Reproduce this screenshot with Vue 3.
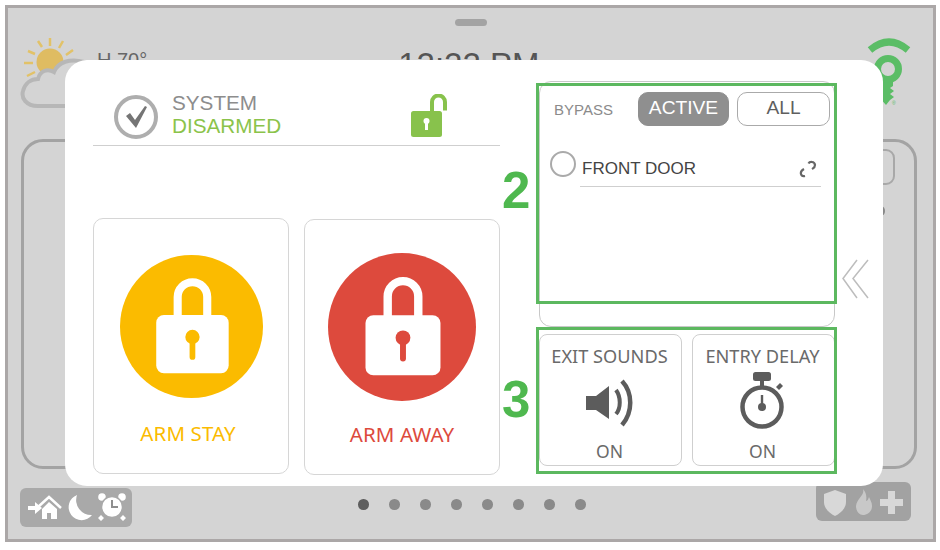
<script setup>
const armCards = [
  { label: 'ARM STAY', color: '#fbbb00', cls: 'stay' },
  { label: 'ARM AWAY', color: '#dd4a3d', cls: 'away' }
];

const dots = [0, 1, 2, 3, 4, 5, 6, 7];
</script>

<template>
  <div class="frame">
    <div class="handle"></div>

    <div class="status-bar">
      <svg class="weather" viewBox="18 36 72 74" width="72" height="74">
        <g stroke="#e2c268" stroke-width="2.5" fill="none">
          <path d="M50 38v8M38 41l4 6M63 41l-4 7M28 51l7 3M73 50l-7 5M24 63h9M27 76l8-4" />
        </g>
        <circle cx="50" cy="62" r="13.5" fill="#dfbc62" />
        <path
          d="M88 106H38C26 106 21 98 23 91C25 83 31 79 38 79C40 71 47 68 54 72C58 62 70 58 84 62Z"
          fill="#d4d4d4"
          stroke="#b7b7b7"
          stroke-width="4"
        />
      </svg>
      <span class="temp">H 70°</span>
      <span class="time">12:22 PM</span>
      <svg class="key" viewBox="860 36 56 72" width="56" height="72">
        <path d="M870 50Q889 34 908 50" fill="none" stroke="#5bbd66" stroke-width="7" />
        <path d="M880 78H893V86L890 88L894 91L890 94L894 97L890 100L886 105L878 96Z" fill="#5bbd66" />
        <circle cx="888" cy="69" r="10.5" fill="#d4d4d4" stroke="#5bbd66" stroke-width="7" />
        <text x="892" y="105" class="reg">®</text>
      </svg>
    </div>

    <div class="back-panel">
      <div class="back-box"></div>
      <div class="back-dot"></div>
    </div>

    <div class="footer">
      <div class="tray tray-left">
        <svg viewBox="0 0 112 39" width="112" height="39" fill="#fff">
          <path d="M8 18h7v-4l7 6-7 6v-4H8z" />
          <path d="M18 19L29 9l12 11" fill="none" stroke="#fff" stroke-width="2.5" />
          <path d="M22 21l7-7 8 7v10h-6v-6h-4v6h-5z" />
          <path d="M57 7A13 13 0 1 0 72 27A15 15 0 0 1 57 7Z" />
          <circle cx="82" cy="9" r="3.8" />
          <circle cx="102" cy="9" r="3.8" />
          <path d="M81 27l3 3-3 3-3-3zM103 27l3 3-3 3-3-3z" />
          <circle cx="92" cy="19" r="10.5" fill="#fff" stroke="#a9a9a9" stroke-width="1.5" />
          <path d="M92 12v7h6" fill="none" stroke="#8f8f8f" stroke-width="2" />
        </svg>
      </div>
      <div class="dots">
        <span v-for="d in dots" :key="d" class="dot" :class="{ current: d === 0 }"></span>
      </div>
      <div class="tray tray-right">
        <svg viewBox="0 0 95 39" width="95" height="39" fill="#d8d8d8">
          <path d="M19 8l11 4v8c0 6-5 11-11 14c-6-3-11-8-11-14v-8z" />
          <path d="M47 7c2 6-6 9-7 17c0 5 3 9 7 9s9-3 9-9c0-4-2-6-3-9c-1 3-2 4-3 4c1-4 0-9-3-12z" opacity="0.7" />
          <path d="M72 9h7v8h8v7h-8v8h-7v-8h-8v-7h8z" />
        </svg>
      </div>
    </div>

    <div class="modal">
      <div class="left-col">
        <div class="system-head">
          <svg class="check" viewBox="0 0 46 46" width="46" height="46">
            <circle cx="23" cy="23" r="20" fill="none" stroke="#aeaeae" stroke-width="4" />
            <path d="M13 22l4-3 5 7 10-14 2 1-11 21z" fill="#757575" />
          </svg>
          <div class="system-text">
            <div class="system-label">SYSTEM</div>
            <div class="system-state">DISARMED</div>
          </div>
          <svg class="open-lock" viewBox="0 0 36 44" width="36" height="44">
            <path d="M21 18V8a6.5 6.5 0 0 1 13 0V16.5" fill="none" stroke="#88c24c" stroke-width="4" />
            <rect x="0" y="17" width="31" height="26" rx="2.5" fill="#88c24c" />
            <circle cx="15.5" cy="27" r="3" fill="#fff" />
            <rect x="14" y="27" width="3" height="9" fill="#fff" />
          </svg>
        </div>

        <div class="arm-row">
          <div v-for="card in armCards" :key="card.label" class="arm-card" :class="card.cls">
            <svg class="arm-icon" viewBox="0 0 150 150">
              <circle cx="75" cy="75" r="75" :fill="card.color" />
              <path d="M60.5 65V44a15.5 15.5 0 0 1 31 0V65" fill="none" stroke="#fff" stroke-width="8.5" />
              <rect x="38" y="63" width="76" height="61" rx="8" fill="#fff" />
              <circle cx="76" cy="86" r="7.5" :fill="card.color" />
              <rect x="73" y="86" width="6" height="24" rx="3" :fill="card.color" />
            </svg>
            <div class="arm-label" :style="{ color: card.color }">{{ card.label }}</div>
          </div>
        </div>
      </div>

      <div class="right-col">
        <div class="bypass-panel">
          <div class="bypass-head">
            <span class="bypass-title">BYPASS</span>
            <span class="tab tab-active">ACTIVE</span>
            <span class="tab">ALL</span>
          </div>
          <div class="zone-row">
            <span class="radio"></span>
            <div class="zone-line">
              <span class="zone-name">FRONT DOOR</span>
              <svg viewBox="0 0 18 18" width="18" height="18" fill="none" stroke="#666" stroke-width="2.2">
                <path d="M9.5 3.5C10.5 1.5 15.5 1 16 5C16 7.5 14.5 8 13 9" />
                <path d="M5 9C3 10 1.5 12 2 14C2.5 16 4 16.5 6 16" />
              </svg>
            </div>
          </div>
        </div>

        <div class="tools">
          <div class="tool">
            <div class="tool-label">EXIT SOUNDS</div>
            <svg class="tool-icon" viewBox="0 0 50 48" width="50" height="48">
              <path d="M1 17H11L24 7V40L11 31H1Z" fill="#5c5c5c" />
              <path d="M31 11C36 18 36 29 31 35" fill="none" stroke="#5c5c5c" stroke-width="4" />
              <path d="M37 2C48 14 48 33 37 46" fill="none" stroke="#5c5c5c" stroke-width="4.5" />
            </svg>
            <div class="tool-value">ON</div>
          </div>
          <div class="tool">
            <div class="tool-label">ENTRY DELAY</div>
            <svg class="tool-icon" viewBox="0 0 50 60" width="50" height="60">
              <rect x="15" y="0" width="18" height="9" rx="2.5" fill="#5c5c5c" />
              <rect x="22" y="8" width="4" height="6" fill="#5c5c5c" />
              <path d="M38 15l4-4 3 3-4 4z" fill="#5c5c5c" />
              <circle cx="24" cy="35" r="19.5" fill="none" stroke="#5c5c5c" stroke-width="4.5" />
              <circle cx="24" cy="35" r="4" fill="#5c5c5c" />
              <rect x="22.8" y="23" width="2.4" height="12" fill="#5c5c5c" />
            </svg>
            <div class="tool-value">ON</div>
          </div>
        </div>
      </div>

      <svg class="chevrons" viewBox="0 0 28 40" width="28" height="40" fill="none" stroke="#bdbdbd" stroke-width="1.5">
        <path d="M16 1L2 19.5L16 39" />
        <path d="M27 1L12 19.5L27 39" />
      </svg>

      <div class="note-box note-bypass"></div>
      <div class="note-box note-tools"></div>
      <span class="note-num num-two">2</span>
      <span class="note-num num-three">3</span>
    </div>
  </div>
</template>

<style>
html,
body {
  background: #fff;
  overflow: hidden;
}
</style>

<style scoped>
.frame {
  position: relative;
  box-sizing: border-box;
  width: 931px;
  height: 537px;
  margin: 5px 0 0 5px;
  border: 3px solid #aba7a7;
  background: #d4d4d4;
  font-family: "Liberation Sans", Arial, sans-serif;
  overflow: hidden;
}

.handle {
  width: 32px;
  height: 7px;
  margin: 11px auto 0;
  border-radius: 4px;
  background: #a3a3a3;
}

.status-bar {
  display: flex;
  align-items: flex-start;
  height: 113px;
  padding-left: 10px;
}

.weather {
  margin-top: 10px;
  flex: none;
}

.temp {
  margin: 23px 0 0 7px;
  font-size: 20px;
  color: #666;
}

.time {
  margin: 20px 0 0 251px;
  font-size: 33px;
  color: #555;
  white-space: nowrap;
}

.key {
  margin: 10px 0 0 320px;
  flex: none;
}

.reg {
  font-size: 5px;
  fill: #5bbd66;
}

.back-panel {
  position: relative;
  box-sizing: border-box;
  width: 896px;
  height: 330px;
  margin-left: 13px;
  border: 3px solid #a3a3a3;
  border-radius: 22px;
}

.back-box {
  position: absolute;
  right: 19px;
  top: 7px;
  width: 30px;
  height: 32px;
  border: 2px solid #a8a8a8;
  border-radius: 9px;
}

.back-dot {
  position: absolute;
  right: 29px;
  top: 64px;
  width: 8px;
  height: 10px;
  border-radius: 50%;
  background: #888;
}

.footer {
  display: flex;
  align-items: flex-start;
  justify-content: space-between;
  height: 45px;
  margin-top: 13px;
  padding: 0 22px 0 12px;
}

.tray {
  flex: none;
  height: 39px;
  border-radius: 6px;
  background: #a9a9a9;
}

.tray svg {
  display: block;
}

.tray-left {
  width: 112px;
  margin-top: 6px;
}

.tray-right {
  width: 95px;
  background: #a2a2a2;
}

.dots {
  display: flex;
  gap: 20.5px;
  margin: 17px 0 0 -4px;
}

.dot {
  width: 10.5px;
  height: 10.5px;
  border-radius: 50%;
  background: #8a8a8a;
}

.dot.current {
  background: #5e5e5e;
}

.modal {
  position: absolute;
  left: 57px;
  top: 52px;
  box-sizing: border-box;
  display: flex;
  width: 818px;
  height: 426px;
  padding: 21px 0 0 28px;
  border-radius: 22px;
  background: #fff;
}

.left-col {
  width: 407px;
  flex: none;
}

.system-head {
  display: flex;
  align-items: center;
  box-sizing: border-box;
  height: 65px;
  padding: 8px 0 0 20px;
  border-bottom: 1.5px solid #cfcfcf;
}

.check {
  flex: none;
}

.system-text {
  margin: -5px 0 0 13px;
  width: 112px;
  line-height: 22.5px;
  font-size: 20.7px;
}

.system-label {
  color: #8d8d8d;
}

.system-state {
  color: #8bc34a;
}

.open-lock {
  margin: -2px 0 0 127px;
  flex: none;
}

.arm-row {
  display: flex;
  gap: 15px;
  margin-top: 72px;
}

.arm-card {
  box-sizing: border-box;
  display: flex;
  flex-direction: column;
  align-items: center;
  width: 196px;
  height: 256px;
  border: 1.5px solid #d6d6d6;
  border-radius: 10px;
  font-family: "Noto Sans", sans-serif;
}

.arm-card.away {
  margin-top: 1px;
}

.arm-icon {
  display: block;
  flex: none;
}

.stay .arm-icon {
  width: 143px;
  height: 143px;
  margin-top: 36px;
}

.away .arm-icon {
  width: 148px;
  height: 148px;
  margin-top: 33px;
}

.arm-label {
  font-size: 20.5px;
  line-height: 24px;
  letter-spacing: 0.1px;
}

.stay .arm-label {
  margin: 23px 0 0 -6px;
}

.away .arm-label {
  margin-top: 21px;
}

.right-col {
  width: 296px;
  flex: none;
  margin-left: 39px;
}

.bypass-panel {
  box-sizing: border-box;
  height: 246px;
  border: 1.5px solid #c8c8c8;
  border-radius: 12px;
}

.bypass-head {
  display: flex;
  align-items: center;
  height: 34px;
  margin-top: 10px;
  padding-left: 14px;
}

.bypass-title {
  width: 84px;
  flex: none;
  font-size: 15px;
  color: #8b8b8b;
}

.tab {
  box-sizing: border-box;
  width: 93px;
  height: 34px;
  margin-left: 8px;
  border: 1.5px solid #aaa;
  border-radius: 10px;
  font-size: 19.2px;
  line-height: 29px;
  text-align: center;
  color: #5f5f5f;
}

.tab-active {
  width: 91px;
  margin-left: 0;
  border-color: #8f8f8f;
  background: #8f8f8f;
  color: #fff;
}

.zone-row {
  display: flex;
  align-items: flex-start;
  margin: 25px 0 0 10px;
}

.radio {
  box-sizing: border-box;
  width: 26px;
  height: 26px;
  flex: none;
  border: 2.5px solid #aaa;
  border-radius: 50%;
}

.zone-line {
  display: flex;
  align-items: center;
  justify-content: space-between;
  box-sizing: border-box;
  width: 241px;
  height: 36px;
  margin-left: 4px;
  padding: 1px 4px 0 2px;
  border-bottom: 1.5px solid #cfcfcf;
}

.zone-name {
  font-size: 17px;
  color: #444;
}

.tools {
  display: flex;
  gap: 10px;
  margin-top: 7px;
}

.tool {
  box-sizing: border-box;
  position: relative;
  display: flex;
  flex-direction: column;
  align-items: center;
  width: 143px;
  height: 132px;
  border: 1.5px solid #cfcfcf;
  border-radius: 8px;
  font-family: "Noto Sans", sans-serif;
  color: #6a6a6a;
}

.tool-label {
  margin: 9px 0 0 -2px;
  font-size: 18.2px;
  line-height: 24px;
  white-space: nowrap;
}

.tool-icon {
  position: absolute;
  left: 45px;
  top: 44px;
}

.tool + .tool .tool-icon {
  top: 37px;
}

.tool-value {
  margin: auto 0 2px -2px;
  font-size: 17.5px;
  line-height: 24px;
}

.chevrons {
  flex: none;
  margin: 178px 0 0 6px;
}

.note-box {
  position: absolute;
  left: 471px;
  width: 301px;
  box-sizing: border-box;
  border: 3px solid #5cb85f;
}

.note-bypass {
  top: 23px;
  height: 221px;
}

.note-tools {
  top: 267px;
  height: 147px;
}

.note-num {
  position: absolute;
  left: 437px;
  font-size: 51px;
  font-weight: 700;
  line-height: 51px;
  color: #4fb84f;
}

.num-two {
  top: 105px;
}

.num-three {
  top: 314px;
}
</style>
